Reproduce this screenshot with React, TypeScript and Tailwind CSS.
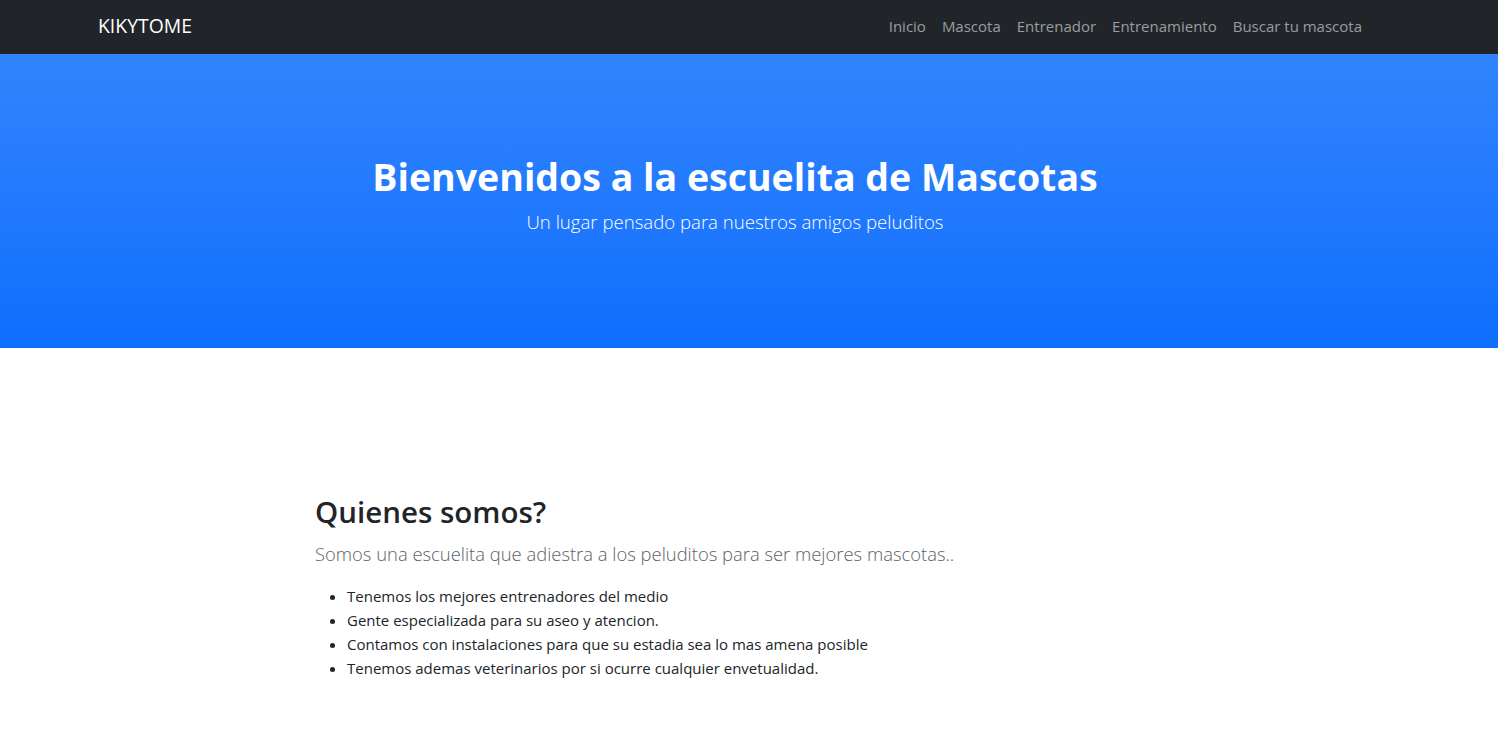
const links = ["Inicio", "Mascota", "Entrenador", "Entrenamiento", "Buscar tu mascota"];

const items = [
  "Tenemos los mejores entrenadores del medio",
  "Gente especializada para su aseo y atencion.",
  "Contamos con instalaciones para que su estadia sea lo mas amena posible",
  "Tenemos ademas veterinarios por si ocurre cualquier envetualidad.",
];

export default function App() {
  return (
    <div className="min-h-[740px] bg-white font-['Open_Sans',sans-serif] text-[#212529]">
      {/* Navbar */}
      <nav className="h-[54px] bg-[#212529] flex items-center justify-between pl-[98px] pr-[136px] pb-[2px]">
        <span className="text-[19.4px] text-white">KIKYTOME</span>
        <ul className="flex items-center gap-4">
          {links.map((l) => (
            <li key={l} className="text-[15px] text-[#9a9da0]">
              {l}
            </li>
          ))}
        </ul>
      </nav>

      {/* Hero */}
      <header className="h-[294px] bg-gradient-to-b from-[#3184fd] to-[#0d6efd] text-white text-center pt-[99px]">
        <div className="mr-[28px]">
          <h1 className="text-[37.5px] font-bold leading-[48px]">Bienvenidos a la escuelita de Mascotas</h1>
          <p className="mt-[6px] text-[18.6px] font-light leading-[30px]">Un lugar pensado para nuestros amigos peluditos</p>
        </div>
      </header>

      {/* Quienes somos */}
      <section className="pt-[145px] pl-[315px]">
        <h2 className="text-[29.5px] font-semibold leading-[38px] mb-2">Quienes somos?</h2>
        <p className="text-[18.4px] font-light leading-[30px] text-[#5c636a] mb-[15px]">
          Somos una escuelita que adiestra a los peluditos para ser mejores mascotas..
        </p>
        <ul className="list-disc pl-8 text-[15px] leading-[24px]">
          {items.map((i) => (
            <li key={i}>{i}</li>
          ))}
        </ul>
      </section>
    </div>
  );
}
